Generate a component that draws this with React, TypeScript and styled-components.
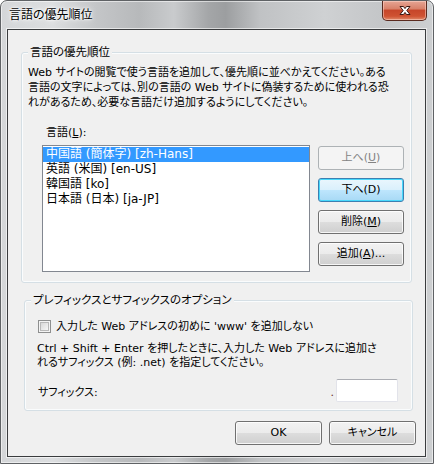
import React from "react";
import styled, { createGlobalStyle } from "styled-components";

const GlobalStyle = createGlobalStyle`
  html, body {
    margin: 0;
    padding: 0;
    background: #ffffff;
  }
  body {
    font-family: "DejaVu Sans", "Noto Sans CJK JP", sans-serif;
    font-size: 11px;
    color: #000;
    font-feature-settings: "palt";
  }
`;

const Window = styled.div`
  width: 434px;
  height: 464px;
  box-sizing: border-box;
  display: flex;
  flex-direction: column;
  padding: 0 7px 6px 6px;
  border: 1px solid #5f6265;
  border-radius: 7px 7px 0 0;
  background: linear-gradient(
    90deg,
    #d4d6d8 0%,
    #dcdee0 12%,
    #c4c6c8 22%,
    #b7b9bb 32%,
    #c9cbcd 40%,
    #a4a6a8 48%,
    #9c9ea0 52%,
    #c0c2c4 60%,
    #cfd1d3 75%,
    #c4c6c8 88%,
    #cdcfd1 100%
  );
  box-shadow: inset 0 0 0 1px rgba(255, 255, 255, 0.55);
`;

const TitleBar = styled.div`
  height: 28px;
  display: flex;
  align-items: flex-start;
  justify-content: space-between;
`;

const Title = styled.span`
  margin: 6px 0 0 2px;
  font-size: 12px;
  line-height: 16px;
  text-shadow: 0 0 6px #fff, 0 0 3px #fff, 0 0 2px #fff;
`;

const CloseButton = styled.div`
  width: 43px;
  height: 19px;
  margin-right: -1px;
  display: flex;
  align-items: center;
  justify-content: center;
  border: 1px solid #5a2a1f;
  border-top: none;
  border-radius: 0 0 5px 5px;
  background: linear-gradient(
    180deg,
    #e6a594 0%,
    #d9826b 40%,
    #c7462a 50%,
    #cf5232 80%,
    #e08a6a 100%
  );
  box-shadow: inset 0 0 0 1px rgba(255, 220, 210, 0.5);
`;

const Client = styled.div`
  flex: 1;
  display: flex;
  flex-direction: column;
  background: #f0f0f0;
  border: 1px solid #3a3c3e;
  box-shadow: 0 0 0 1px rgba(255, 255, 255, 0.6);
  padding: 22px 0 11px 0;
`;

const Group = styled.div<{ $ml: number; $mr: number; $mt?: number }>`
  position: relative;
  margin: ${(p) => p.$mt ?? 0}px ${(p) => p.$mr}px 0 ${(p) => p.$ml}px;
  border: 1px solid #d5dfe5;
  border-radius: 3px;
  box-shadow: inset 0 0 0 1px #fafcfd;
  display: flex;
  flex-direction: column;
`;

const Legend = styled.span<{ $left: number }>`
  position: absolute;
  top: -9px;
  left: ${(p) => p.$left}px;
  padding: 0 2px;
  background: #f0f0f0;
  font-size: 11.5px;
  line-height: 16px;
  white-space: nowrap;
`;

const Description = styled.p<{ $lh: number; $mt?: number }>`
  margin: ${(p) => p.$mt ?? 0}px 0 0 0;
  line-height: ${(p) => p.$lh}px;
  white-space: nowrap;
`;

const FieldLabel = styled.div`
  margin: 15px 0 0 18px;
  line-height: 15px;
`;

const Mnemonic = styled.span`
  text-decoration: underline;
  text-underline-offset: 1px;
`;

const ListRow = styled.div`
  display: flex;
  align-items: flex-start;
  gap: 8px;
  margin: 5px 0 0 14px;
`;

const ListBox = styled.div`
  width: 266px;
  height: 124px;
  background: #fff;
  border: 1px solid #828790;
  padding-top: 1px;
  box-sizing: content-box;
`;

const ListItem = styled.div<{ $selected?: boolean }>`
  height: 15px;
  line-height: 15px;
  padding: 0 3px;
  font-size: 12px;
  white-space: nowrap;
  background: ${(p) => (p.$selected ? "#3399ff" : "transparent")};
  color: ${(p) => (p.$selected ? "#fff" : "#000")};
`;

const ButtonColumn = styled.div`
  display: flex;
  flex-direction: column;
  gap: 8px;
  margin-top: 1px;
`;

const Button = styled.div<{ $variant?: "default" | "focused" | "disabled"; $w?: number }>`
  width: ${(p) => p.$w ?? 86}px;
  height: 24px;
  box-sizing: border-box;
  display: flex;
  align-items: center;
  justify-content: center;
  border-radius: 3px;
  line-height: 16px;
  white-space: nowrap;
  border: 1px solid
    ${(p) =>
      p.$variant === "focused" ? "#3c7fb1" : p.$variant === "disabled" ? "#adb2b5" : "#707070"};
  color: ${(p) => (p.$variant === "disabled" ? "#838383" : "#000")};
  background: ${(p) =>
    p.$variant === "focused"
      ? "linear-gradient(180deg, #eaf6fd 0%, #d9f0fc 50%, #bee6fd 50%, #a7d9f5 100%)"
      : p.$variant === "disabled"
      ? "#f4f4f4"
      : "linear-gradient(180deg, #f2f2f2 0%, #ebebeb 50%, #dddddd 50%, #cfcfcf 100%)"};
  box-shadow: ${(p) =>
    p.$variant === "disabled"
      ? "none"
      : p.$variant === "focused"
      ? "inset 0 0 0 1px #48d8fb"
      : "inset 0 0 0 1px rgba(255,255,255,0.8)"};
`;

const CheckRow = styled.div`
  display: flex;
  align-items: center;
  gap: 5px;
  line-height: 15px;
  margin: 0 0 0 1px;
`;

const CheckBox = styled.span`
  width: 13px;
  height: 13px;
  box-sizing: border-box;
  border: 1px solid #8e8f8f;
  background: linear-gradient(135deg, #cfcfcf 0%, #ececec 60%, #ffffff 100%);
  box-shadow: inset 0 0 0 1px #f4f4f4, inset 0 0 0 2px #b8b8b8;
`;

const SuffixRow = styled.div`
  display: flex;
  align-items: center;
  margin-top: 9px;
  padding-right: 2px;
`;

const SuffixLabel = styled.span`
  flex: 1;
  margin: 1px 0 0 1px;
`;

const Dot = styled.span`
  align-self: flex-end;
  margin: 0 2px 3px 0;
  line-height: 12px;
  color: #6a2a1a;
`;

const TextInput = styled.div`
  width: 62px;
  height: 23px;
  box-sizing: border-box;
  background: #fff;
  border: 1px solid #e2e3ea;
  border-top-color: #abadb3;
  border-radius: 2px;
`;

const Group1Body = styled.div`
  display: flex;
  flex-direction: column;
  padding: 12px 0 10px 6px;
`;

const Group2Body = styled.div`
  display: flex;
  flex-direction: column;
  padding: 18px 12px 8px 12px;
`;

const Footer = styled.div`
  display: flex;
  justify-content: flex-end;
  gap: 7px;
  margin: 10px 9px 0 0;
`;

const CloseGlyph = () => (
  <svg width="14" height="11" viewBox="0 0 14 11">
    <path
      d="M2 1.5 L5.5 1.5 L7 3.6 L8.5 1.5 L12 1.5 L8.8 5.5 L12 9.5 L8.5 9.5 L7 7.4 L5.5 9.5 L2 9.5 L5.2 5.5 Z"
      fill="#fff"
      stroke="#3b1a14"
      strokeWidth="1"
      strokeLinejoin="round"
    />
  </svg>
);

const languages = [
  "中国語 (簡体字) [zh-Hans]",
  "英語 (米国) [en-US]",
  "韓国語 [ko]",
  "日本語 (日本) [ja-JP]",
];

export default function App() {
  return (
    <>
      <GlobalStyle />
      <Window>
        <TitleBar>
          <Title>言語の優先順位</Title>
          <CloseButton>
            <CloseGlyph />
          </CloseButton>
        </TitleBar>
        <Client>
          <Group $ml={13} $mr={13}>
            <Legend $left={6}>言語の優先順位</Legend>
            <Group1Body>
              <Description $lh={15}>
                Web サイトの閲覧で使う言語を追加して、優先順に並べかえてください。ある
                <br />
                言語の文字によっては、別の言語の Web サイトに偽装するために使われる恐
                <br />
                れがあるため、必要な言語だけ追加するようにしてください。
              </Description>
              <FieldLabel>
                言語(<Mnemonic>L</Mnemonic>):
              </FieldLabel>
              <ListRow>
                <ListBox>
                  {languages.map((l, i) => (
                    <ListItem key={l} $selected={i === 0}>
                      {l}
                    </ListItem>
                  ))}
                </ListBox>
                <ButtonColumn>
                  <Button $variant="disabled">
                    上へ(<Mnemonic>U</Mnemonic>)
                  </Button>
                  <Button $variant="focused">下へ(D)</Button>
                  <Button>
                    削除(<Mnemonic>M</Mnemonic>)
                  </Button>
                  <Button>
                    追加(<Mnemonic>A</Mnemonic>)...
                  </Button>
                </ButtonColumn>
              </ListRow>
            </Group1Body>
          </Group>
          <Group $ml={16} $mr={12} $mt={17}>
            <Legend $left={6}>プレフィックスとサフィックスのオプション</Legend>
            <Group2Body>
              <CheckRow>
                <CheckBox />
                <span>入力した Web アドレスの初めに 'www' を追加しない</span>
              </CheckRow>
              <Description $lh={14} $mt={8}>
                Ctrl + Shift + Enter を押したときに、入力した Web アドレスに追加さ
                <br />
                れるサフィックス (例: .net) を指定してください。
              </Description>
              <SuffixRow>
                <SuffixLabel>サフィックス:</SuffixLabel>
                <Dot>.</Dot>
                <TextInput />
              </SuffixRow>
            </Group2Body>
          </Group>
          <Footer>
            <Button $w={87}>OK</Button>
            <Button $w={87}>キャンセル</Button>
          </Footer>
        </Client>
      </Window>
    </>
  );
}
